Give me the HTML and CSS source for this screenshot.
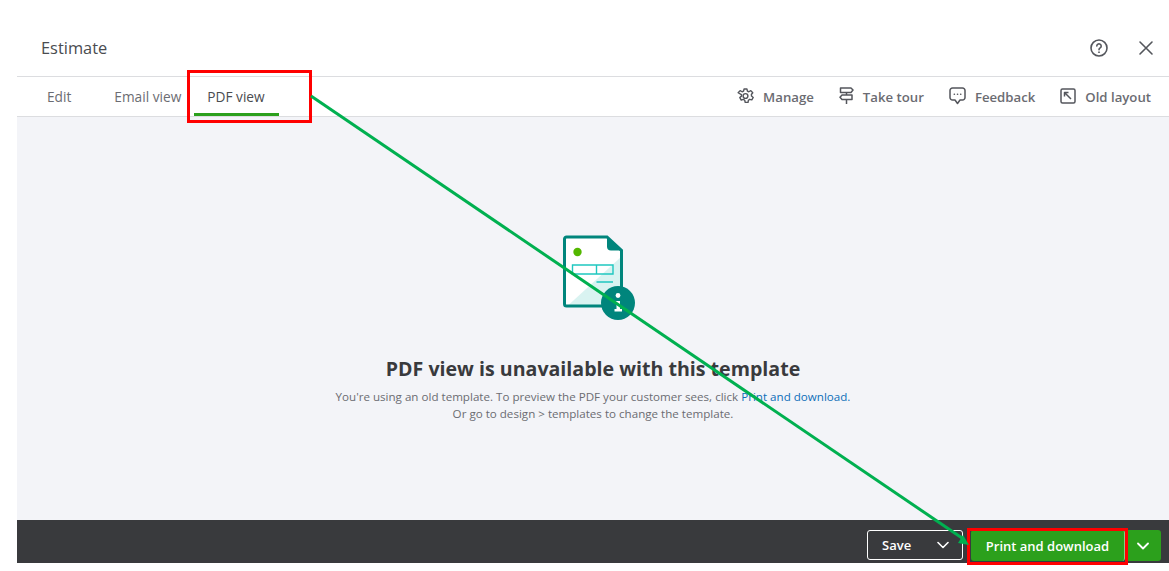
FILE: index.html
```html
<!DOCTYPE html>
<html lang="en">
<head>
    <meta charset="UTF-8">
    <title>Estimate</title>
    <link rel="stylesheet" href="styles.css">
</head>
<body>

<div class="panel">
    <header class="top-bar">
        <div class="title">Estimate</div>
        <div class="top-icons">
            <svg width="20" height="20" viewBox="0 0 20 20" fill="none" stroke="#54565c" stroke-width="1.6"><circle cx="10" cy="10" r="8"/><path d="M7.8 8a2.2 2.2 0 1 1 3.4 1.9c-.8.5-1.2.9-1.2 1.8" stroke-linecap="round"/><circle cx="10" cy="14.2" r=".5" fill="#54565c" stroke-width="1"/></svg>
            <svg width="16" height="16" viewBox="0 0 16 16" fill="none" stroke="#54565c" stroke-width="1.6" stroke-linecap="round"><path d="M2 2l12 12M14 2L2 14"/></svg>
        </div>
    </header>

    <nav class="tab-bar">
        <div class="tabs">
            <a class="tab tab-edit">Edit</a>
            <a class="tab tab-email">Email view</a>
            <a class="tab tab-pdf active">PDF view</a>
        </div>
        <div class="actions">
            <a class="action">
                <svg width="17" height="18" viewBox="0 0 24 24" fill="none" stroke="#54565c" stroke-width="2" stroke-linejoin="round"><circle cx="12" cy="12" r="3.4"/><path d="M10 2h4l.7 3.1 2 .9 2.8-1.6 2.7 3-1.900 2.500.2 2.200 2.400 2-2 3.400-3-.8-1.800 1.300-.5 3h-4l-.7-3-1.900-1.200-3 .9-2-3.500 2.300-2-.1-2.200L1.600 7.400l2.800-3 2.800 1.600 2.100-1z"/></svg>
                Manage
            </a>
            <a class="action">
                <svg width="15" height="18" viewBox="0 0 15 18" fill="none" stroke="#54565c" stroke-width="1.500" stroke-linejoin="round"><path d="M1.500 1h10.500l2 2-2 2.500H1.500zM13 8H3L1 10.200 3 12.500h10zM7.500 5.500V8M7.500 12.500V17"/></svg>
                Take tour
            </a>
            <a class="action">
                <svg width="17" height="18" viewBox="0 0 17 18" fill="none" stroke="#54565c" stroke-width="1.500" stroke-linejoin="round"><path d="M3.500 1h10A2.500 2.500 0 0 1 16 3.500v7a2.500 2.500 0 0 1-2.500 2.500H11L8.500 16.500 6 13H3.500A2.500 2.500 0 0 1 1 10.500v-7A2.500 2.500 0 0 1 3.500 1z"/><path d="M5.300 7.200h.1M8.500 7.200h.1M11.700 7.200h.1" stroke-linecap="round" stroke-width="1.600"/></svg>
                Feedback
            </a>
            <a class="action">
                <svg width="16" height="16" viewBox="0 0 16 16" fill="none" stroke="#54565c" stroke-width="1.500"><rect x="1" y="1" width="14" height="14" rx="1.500"/><path d="M11 11L5 5M4.500 8.500v-4h4" stroke-linejoin="round"/></svg>
                Old layout
            </a>
        </div>
    </nav>

    <main class="content">
        <svg class="doc-icon" width="76" height="86" viewBox="0 0 76 86">
            <path d="M3 3h42l14 14v53H3z" fill="#fff"/>
            <path d="M59 22v48H6.500z" fill="#d9f3f1"/>
            <path d="M2.500 4a2 2 0 0 1 2-2H45l14.500 13.500V69a2 2 0 0 1-2 2H4.500a2 2 0 0 1-2-2z" fill="none" stroke="#00857c" stroke-width="3"/>
            <path d="M45 2l14.500 13.500H49a4 4 0 0 1-4-4z" fill="#00857c"/>
            <circle cx="15.500" cy="17" r="4.200" fill="#53b700"/>
            <path d="M10.500 30H51v9H10.500zM34.500 30v9M34.500 47H51" fill="none" stroke="#1fc7c0" stroke-width="1.400"/>
            <circle cx="56" cy="68" r="17" fill="#00857c"/>
            <circle cx="56" cy="60.500" r="2.400" fill="#fff"/>
            <path d="M53 66h5v8h2v2.500h-7.500V74h2v-5.500H53z" fill="#fff"/>
        </svg>
        <h1 class="message-title">PDF view is unavailable with this template</h1>
        <p class="message-text">You're using an old template. To preview the PDF your customer sees, click <a class="link">Print and download.</a><br>Or go to design &gt; templates to change the template.</p>
    </main>

    <footer class="bottom-bar">
        <button class="btn-save"><span>Save</span><svg width="12" height="8" viewBox="0 0 12 8" fill="none" stroke="#fff" stroke-width="1.600" stroke-linecap="round" stroke-linejoin="round"><path d="M1 1.500l5 5 5-5"/></svg></button>
        <div class="btn-group">
            <button class="btn-print">Print and download</button>
            <button class="btn-more"><svg width="12" height="8" viewBox="0 0 12 8" fill="none" stroke="#fff" stroke-width="1.800" stroke-linecap="round" stroke-linejoin="round"><path d="M1 1.500l5 5 5-5"/></svg></button>
        </div>
    </footer>
</div>

<!-- annotations drawn on top of the screenshot -->
<div class="mark mark-tab"></div>
<div class="mark mark-print"></div>
<svg class="arrow-line" width="1169" height="571" viewBox="0 0 1169 571">
    <path d="M311 96L962 538" stroke="#00b050" stroke-width="3" fill="none"/>
    <path d="M969 545l-11-2 5-8z" fill="#00b050"/>
</svg>

</body>
</html>
```

FILE: styles.css
```css
body {
    margin: 0;
    background: white;
    font-family: "Open Sans", Arial, sans-serif;
    color: #393a3d;
    height: 571px;
    overflow: hidden;
}
.panel {
    margin-left: 17px;
    height: 563px;
    display: flex;
    flex-direction: column;
}
.top-bar {
    height: 77px;
    flex: none;
    box-sizing: border-box;
    border-bottom: 1px solid #dcdde0;
    display: flex;
    justify-content: space-between;
    align-items: center;
    padding: 19px 15px 0 24px;
}
.title {
    font-size: 16.400px;
    color: #4a4c50;
}
.top-icons {
    display: flex;
    align-items: center;
    gap: 29px;
}
.tab-bar {
    height: 40px;
    flex: none;
    box-sizing: border-box;
    border-bottom: 1px solid #dcdde0;
    display: flex;
    justify-content: space-between;
    font-size: 13.700px;
}
.tabs {
    display: flex;
}
.tab {
    color: #6b6c72;
    padding-top: 10px;
    box-sizing: border-box;
}
.tab-edit {
    margin-left: 30px;
}
.tab-email {
    margin-left: 43px;
}
.tab-pdf {
    margin-left: 13px;
    width: 85px;
    padding-left: 13px;
    height: 39px;
    color: #4a4c50;
    border-bottom: 3px solid #2ca01c;
}
.actions {
    display: flex;
    align-items: center;
    padding-right: 18px;
    gap: 25px;
    font-size: 13.200px;
}
.action {
    display: flex;
    align-items: center;
    gap: 9px;
    color: #6b6c72;
    font-weight: 600;
}
.action svg {
    margin-top: -2px;
}
.content {
    flex: 1;
    background: #f3f4f8;
    display: flex;
    flex-direction: column;
    align-items: center;
    padding-top: 118px;
}
.doc-icon {
    display: block;
    margin-left: 14px;
}
.message-title {
    margin: 34px 0 0;
    font-size: 19.600px;
    line-height: 28px;
    font-weight: 700;
    color: #393a3d;
}
.message-text {
    margin: 5px 0 0;
    font-size: 11.600px;
    line-height: 17px;
    text-align: center;
    color: #6b6c72;
}
.link {
    color: #0d6fb8;
}
.bottom-bar {
    height: 43px;
    flex: none;
    box-sizing: border-box;
    background: #393a3d;
    display: flex;
    justify-content: flex-end;
    align-items: flex-end;
    padding: 0 8px 2px 0;
    gap: 8px;
}
.bottom-bar button {
    font-family: inherit;
    font-size: 13px;
    font-weight: 600;
    color: white;
    height: 31px;
    border-radius: 3px;
    cursor: pointer;
}
.bottom-bar .btn-save {
    width: 96px;
    height: 30px;
    margin-bottom: 1px;
    background: transparent;
    border: 1px solid white;
    display: flex;
    align-items: center;
    justify-content: space-between;
    padding: 0 13px 0 14px;
}
.btn-group {
    display: flex;
}
.btn-print {
    width: 154px;
    background: #2ca01c;
    border: 0;
    border-right: 1px solid #8ccb83;
    border-radius: 3px 0 0 3px;
}
.btn-more {
    width: 36px;
    background: #2ca01c;
    border: 0;
    display: flex;
    align-items: center;
    justify-content: center;
}
.mark {
    position: absolute;
    box-sizing: border-box;
    border: 3px solid #ff0000;
}
.mark-tab {
    left: 187px;
    top: 70px;
    width: 125px;
    height: 53px;
}
.mark-print {
    left: 967px;
    top: 528px;
    width: 161px;
    height: 37px;
}
.arrow-line {
    position: absolute;
    left: 0;
    top: 0;
}
```
